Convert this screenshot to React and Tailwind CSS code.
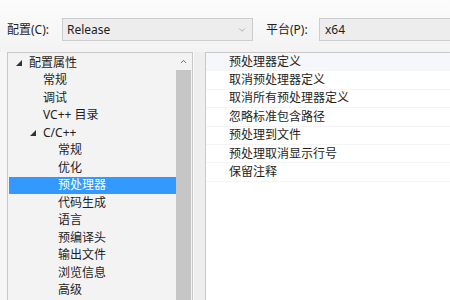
import React from "react";
import { ChevronDown, ChevronUp } from "lucide-react";

const Tri = () => (
  <svg width="6" height="6" viewBox="0 0 6 6" className="shrink-0">
    <polygon points="6,0 6,6 0,6" fill="#333" />
  </svg>
);

const tree = [
  { t: "配置属性", lvl: 0, open: true },
  { t: "常规", lvl: 1 },
  { t: "调试", lvl: 1 },
  { t: "VC++ 目录", lvl: 1 },
  { t: "C/C++", lvl: 1, open: true },
  { t: "常规", lvl: 2 },
  { t: "优化", lvl: 2 },
  { t: "预处理器", lvl: 2, sel: true },
  { t: "代码生成", lvl: 2 },
  { t: "语言", lvl: 2 },
  { t: "预编译头", lvl: 2 },
  { t: "输出文件", lvl: 2 },
  { t: "浏览信息", lvl: 2 },
  { t: "高级", lvl: 2 },
];

const props = [
  "预处理器定义",
  "取消预处理器定义",
  "取消所有预处理器定义",
  "忽略标准包含路径",
  "预处理到文件",
  "预处理取消显示行号",
  "保留注释",
];

export default function App() {
  return (
    <div className="w-[450px] h-[300px] overflow-hidden bg-[#f6f6f6] text-[12px] text-[#1e1e1e] font-['Noto_Sans','Noto_Sans_CJK_SC',sans-serif] flex flex-col">
      <div className="h-[52px] shrink-0 flex items-start pt-[18px] bg-gradient-to-b from-[#fcfcfc] to-[#f3f3f3]">
        <div className="w-[62px] pl-[7px] h-[23px] flex items-center">配置(C):</div>
        <div className="w-[191px] h-[23px] border border-[#cdcdcd] bg-[#ededed] flex items-center pl-[4px] pr-[5px]">
          <span className="flex-1">Release</span>
          <ChevronDown size={10} color="#8a8a8a" strokeWidth={1.5} />
        </div>
        <div className="w-[66px] pl-[13px] h-[23px] flex items-center">平台(P):</div>
        <div className="flex-1 h-[23px] border border-r-0 border-[#cdcdcd] bg-[#ededed] flex items-center pl-[5px]">
          x64
        </div>
      </div>
      <div className="flex-1 flex min-h-0">
        <div className="ml-[7px] w-[186px] border border-b-0 border-[#c8c8c8] bg-[#f3f3f3] flex">
          <div className="flex-1 pt-px pl-px">
            {tree.map((r, i) => (
              <div
                key={i}
                className={`h-[17.5px] flex items-center ${r.sel ? "bg-[#3399ff] text-white" : ""}`}
              >
                <div
                  className={`flex items-center justify-end pr-[7px] ${
                    r.lvl === 0 ? "w-[20px]" : r.lvl === 1 ? "w-[34px]" : "w-[49px]"
                  }`}
                >
                  {r.open ? <Tri /> : null}
                </div>
                <span className={r.lvl === 0 ? "" : r.lvl === 1 ? "" : ""}>{r.t}</span>
              </div>
            ))}
          </div>
          <div className="w-[15px] mr-px flex flex-col">
            <div className="h-[17px] flex items-center justify-center bg-[#f3f3f3]">
              <ChevronUp size={9} color="#606060" strokeWidth={2.5} />
            </div>
            <div className="flex-1 bg-[#c6c6c6]" />
          </div>
        </div>
        <div className="w-[12px] bg-[#eeeeee] border-l border-[#fafafa]" />
        <div className="flex-1 border-l border-t border-[#c8c8c8] bg-white">
          {props.map((p, i) => (
            <div
              key={i}
              className={`h-[18.4px] flex items-center pl-[23px] border-b border-[#f4f4f4] ${
                i === 0 ? "bg-[#f5f7fb]" : ""
              }`}
            >
              {p}
            </div>
          ))}
        </div>
      </div>
    </div>
  );
}
